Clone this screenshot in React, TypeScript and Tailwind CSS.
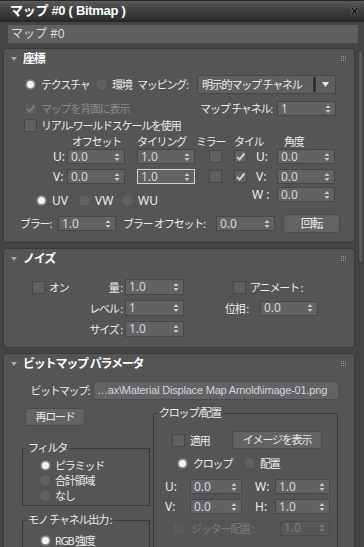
import React from "react";

function Arrows({ dim }: { dim?: boolean }) {
  return (
    <svg width="6" height="10" viewBox="0 0 6 10" className="shrink-0">
      <path d="M0.5 4 L3 1 L5.5 4 Z M0.5 6 L5.5 6 L3 9 Z" fill={dim ? "#7a7a7a" : "#c9c9c9"} />
    </svg>
  );
}

function Spin({ v, w, h = "h-[15px]", focus, dim }: { v: string; w: string; h?: string; focus?: boolean; dim?: boolean }) {
  return (
    <div
      className={`flex ${w} ${h} shrink-0 items-center justify-between border pl-[3px] pr-[4px] text-[12px] tracking-normal ${
        focus ? "border-[#d2d2d2]" : dim ? "border-[#4b4b4b]" : "border-[#464646]"
      } ${dim ? "bg-[#575757] text-[#7c7c7c]" : "bg-[#626262] text-[#cfd7e0]"}`}
    >
      <span className="leading-none">{v}</span>
      <Arrows dim={dim} />
    </div>
  );
}

function Radio({ on }: { on?: boolean }) {
  return (
    <span className="flex h-[13px] w-[13px] shrink-0 items-center justify-center rounded-full border border-[#4e4e4e] bg-[#606060]">
      {on ? <span className="h-[7px] w-[7px] rounded-full bg-[#f4f4f4] shadow-[0_0_2px_1px_rgba(255,255,255,0.45)]" /> : null}
    </span>
  );
}

function Check({ on, dim }: { on?: boolean; dim?: boolean }) {
  return (
    <span className={`flex h-[13px] w-[13px] shrink-0 items-center justify-center border ${dim ? "border-[#525252] bg-[#5a5a5a]" : "border-[#474747] bg-[#606060]"}`}>
      {on ? (
        <svg width="11" height="11" viewBox="0 0 11 11">
          <path d="M2 6 L4.5 8.5 L9.5 2.5" fill="none" stroke={dim ? "#808080" : "#cfcfcf"} strokeWidth="2" />
        </svg>
      ) : null}
    </span>
  );
}

function Btn({ children, className }: { children: React.ReactNode; className: string }) {
  return (
    <div className={`flex shrink-0 items-center justify-center whitespace-nowrap rounded-[3px] border border-[#4b4b4b] bg-[#636363] text-[#e8e8e8] ${className}`}>
      {children}
    </div>
  );
}

function Grip() {
  return (
    <svg width="6" height="6" viewBox="0 0 6 6" className="shrink-0">
      {[0, 2, 4].map((y) => [0, 2, 4].map((x) => <rect key={`${x}-${y}`} x={x} y={y} width="1" height="1" fill="#9a9a9a" />))}
    </svg>
  );
}

function Rollout({ title, className, children }: { title: string; className: string; children: React.ReactNode }) {
  return (
    <section className={`rounded-[3px] border border-[#393939] bg-[#555555] ${className}`}>
      <div className="flex h-[20px] items-center">
        <svg width="6" height="4" viewBox="0 0 6 4" className="ml-[7px] shrink-0">
          <path d="M0 0 L6 0 L3 4 Z" fill="#a8a8a8" />
        </svg>
        <span className="ml-[6px] text-[12px] font-bold text-white">{title}</span>
        <span className="flex-1" />
        <span className="mr-[7px]"><Grip /></span>
      </div>
      {children}
    </section>
  );
}

function Group({ title, className, children }: { title: string; className: string; children: React.ReactNode }) {
  return (
    <fieldset className={`border border-[#393939] ${className}`}>
      <legend className="ml-[3px] whitespace-nowrap px-[2px] text-[11px] leading-[14px] text-[#ececec]">{title}</legend>
      {children}
    </fieldset>
  );
}

const L = "shrink-0 whitespace-nowrap leading-none";

export default function App() {
  return (
    <div className="h-[547px] w-[364px] overflow-hidden bg-[#444444] font-['Noto_Sans','Noto_Sans_CJK_JP',sans-serif] text-[11px] tracking-[-1.2px] text-[#ececec] select-none">
      <div className="flex h-[22px] items-center border-t border-b-[2px] border-t-[#262626] border-b-[#262626] bg-gradient-to-b from-[#5a5a5a] via-[#3e3e3e] to-[#2f2f2f] pl-[10px] pr-[6px]">
        <span className="font-['Liberation_Sans','Noto_Sans_CJK_JP',sans-serif] text-[13px] font-bold tracking-[-0.3px] text-white">マップ #0 ( Bitmap )</span>
        <span className="flex-1" />
        <span className="text-[12px] font-bold tracking-normal text-[#111] [text-shadow:0_0_1px_#ddd]">x</span>
      </div>

      <div className="ml-[8px] mt-[3px] flex h-[18px] w-[350px] items-center bg-[#5f5f5f] pl-[3px] text-[12px] tracking-normal text-[#d8d8d8]">
        マップ #0
      </div>

      <div className="mt-[5px] flex">
        <div className="ml-[3px] w-[352px] shrink-0">
          <Rollout title="座標" className="">
            <div className="mt-[6px] flex h-[19px] items-center">
              <div className="ml-[20px] flex w-[71px] items-center gap-[4px]"><Radio on /><span className={L}>テクスチャ</span></div>
              <div className="flex w-[42px] items-center gap-[4px]"><Radio /><span className={L}>環境</span></div>
              <div className={`w-[60px] ${L}`}>マッピング:</div>
              <div className="flex h-[19px] w-[139px] items-center border border-[#464646] bg-[#5f5f5f]">
                <span className="flex-1 whitespace-nowrap pl-[4px] leading-none">明示的マップ チャネル</span>
                <span className="h-[15px] w-[3px] bg-[#333333]" />
                <span className="flex w-[19px] justify-center">
                  <svg width="7" height="5" viewBox="0 0 7 5"><path d="M0 0 L7 0 L3.5 5 Z" fill="#e6e6e6" /></svg>
                </span>
              </div>
            </div>

            <div className="mt-[7px] flex h-[15px] items-center">
              <div className="ml-[20px] flex w-[176px] items-center gap-[4px]"><Check on dim /><span className={`${L} text-[#8c8c8c]`}>マップを背面に表示</span></div>
              <div className={`flex w-[77px] justify-end pr-[5px] ${L}`}>マップ チャネル:</div>
              <Spin v="1" w="w-[59px]" />
            </div>

            <div className="mt-[2px] flex h-[14px] items-center">
              <div className="ml-[20px] flex items-center gap-[4px]"><Check /><span className={L}>リアル-ワールドスケールを使用</span></div>
            </div>

            <div className="mt-[3px] flex h-[12px] items-center">
              <div className={`ml-[68px] w-[65px] ${L}`}>オフセット</div>
              <div className={`w-[59px] ${L}`}>タイリング</div>
              <div className={`w-[38px] ${L}`}>ミラー</div>
              <div className={`w-[50px] ${L}`}>タイル</div>
              <div className={L}>角度</div>
            </div>

            {[
              { k: "U:", focus: false },
              { k: "V:", focus: true },
            ].map((r, i) => (
              <div key={r.k} className={`flex h-[15px] items-center ${i === 0 ? "mt-[2px]" : "mt-[5px]"}`}>
                <div className={`ml-[49px] w-[14px] text-[12px] tracking-normal ${L}`}>{r.k}</div>
                <Spin v="0.0" w="w-[58px]" />
                <div className="ml-[12px]"><Spin v="1.0" w="w-[58px]" focus={r.focus} /></div>
                <div className="ml-[14px]"><Check /></div>
                <div className="ml-[12px]"><Check on /></div>
                <div className={`w-[30px] pl-[9px] text-[12px] tracking-normal ${L}`}>{r.k}</div>
                <Spin v="0.0" w="w-[58px]" />
              </div>
            ))}

            <div className="mt-[3px] flex h-[20px] items-start">
              <div className="ml-[31px] mt-[7px] flex w-[43px] items-center gap-[4px]"><Radio on /><span className={`text-[12px] tracking-normal ${L}`}>UV</span></div>
              <div className="mt-[7px] flex w-[43px] items-center gap-[4px]"><Radio /><span className={`text-[12px] tracking-normal ${L}`}>VW</span></div>
              <div className="mt-[7px] flex w-[131px] items-center gap-[4px]"><Radio /><span className={`text-[12px] tracking-normal ${L}`}>WU</span></div>
              <div className={`flex h-[15px] w-[25px] items-center text-[12px] tracking-normal ${L}`}>W :</div>
              <Spin v="0.0" w="w-[58px]" />
            </div>

            <div className="mt-[7px] mb-[9px] flex h-[19px] items-center">
              <div className={`ml-[16px] w-[38px] ${L}`}>ブラー:</div>
              <Spin v="1.0" w="w-[58px]" />
              <div className={`ml-[7px] w-[93px] ${L}`}>ブラー オフセット:</div>
              <Spin v="0.0" w="w-[59px]" />
              <Btn className="ml-[8px] h-[19px] w-[57px] text-[12px]">回転</Btn>
            </div>
          </Rollout>

          <Rollout title="ノイズ" className="mt-[5px]">
            <div className="mt-[10px] flex h-[16px] items-center">
              <div className="ml-[28px] flex w-[58px] items-center gap-[4px]"><Check /><span className={L}>オン</span></div>
              <div className={`flex w-[32px] justify-end ${L}`}>量 :</div>
              <div className="ml-[3px]"><Spin v="1.0" w="w-[59px]" h="h-[16px]" /></div>
              <div className="ml-[49px] flex items-center gap-[4px]"><Check /><span className={L}>アニメート :</span></div>
            </div>
            <div className="mt-[5px] flex h-[16px] items-center">
              <div className={`ml-[86px] flex w-[32px] justify-end ${L}`}>レベル :</div>
              <div className="ml-[3px]"><Spin v="1" w="w-[59px]" h="h-[16px]" /></div>
              <div className={`ml-[41px] w-[35px] ${L}`}>位相 :</div>
              <Spin v="0.0" w="w-[58px]" />
            </div>
            <div className="mt-[5px] mb-[10px] flex h-[16px] items-center">
              <div className={`ml-[86px] flex w-[32px] justify-end ${L}`}>サイズ :</div>
              <div className="ml-[3px]"><Spin v="1.0" w="w-[59px]" h="h-[16px]" /></div>
            </div>
          </Rollout>

          <Rollout title="ビットマップ パラメータ" className="mt-[5px] h-[260px]">
            <div className="mt-[7px] flex h-[19px] items-center">
              <div className={`ml-[30px] flex w-[59px] justify-end pr-[4px] tracking-[-1.5px] ${L}`}>ビットマップ:</div>
              <Btn className="h-[19px] w-[246px] !justify-start overflow-hidden pl-[3px] font-['Liberation_Sans',sans-serif] text-[11px] tracking-[-0.2px] !text-[#cfd7e0]">
                {"…ax\\Material Displace Map Arnold\\image-01.png"}
              </Btn>
            </div>

            <div className="flex">
              <div className="w-[149px] shrink-0">
                <Btn className="ml-[21px] mt-[8px] h-[18px] w-[60px]">再ロード</Btn>
                <Group title="フィルタ" className="ml-[18px] mt-[15px] h-[65px] w-[128px]">
                  <div className="mt-[3px] flex flex-col">
                    {[
                      { t: "ピラミッド", on: true },
                      { t: "合計領域", on: false },
                      { t: "なし", on: false },
                    ].map((r) => (
                      <div key={r.t} className="flex h-[15px] items-center gap-[3px] pl-[16px]">
                        <Radio on={r.on} /><span className={L}>{r.t}</span>
                      </div>
                    ))}
                  </div>
                </Group>
                <Group title="モノ チャネル出力 :" className="ml-[18px] mt-[7px] h-[60px] w-[128px]">
                  <div className="mt-[6px] flex h-[15px] items-center gap-[3px] pl-[16px]">
                    <Radio on /><span className={L}>RGB 強度</span>
                  </div>
                </Group>
              </div>

              <Group title="クロップ/配置" className="mt-[6px] h-[150px] w-[185px] shrink-0">
                <div className="mt-[11px] flex h-[18px] items-center">
                  <div className="ml-[18px] flex w-[60px] items-center gap-[5px]"><Check /><span className={L}>適用</span></div>
                  <Btn className="h-[18px] w-[90px]">イメージを表示</Btn>
                </div>
                <div className="mt-[7px] flex h-[14px] items-center">
                  <div className="ml-[22px] flex w-[67px] items-center gap-[4px]"><Radio on /><span className={L}>クロップ</span></div>
                  <div className="flex items-center gap-[4px]"><Radio /><span className={L}>配置</span></div>
                </div>
                {[
                  { a: "U:", b: "W:", m: "mt-[9px]" },
                  { a: "V:", b: "H:", m: "mt-[5px]" },
                ].map((r) => (
                  <div key={r.a} className={`flex h-[15px] items-center ${r.m}`}>
                    <div className={`ml-[11px] w-[25px] text-[12px] tracking-normal ${L}`}>{r.a}</div>
                    <Spin v="0.0" w="w-[52px]" />
                    <div className={`ml-[13px] w-[20px] text-[12px] tracking-normal ${L}`}>{r.b}</div>
                    <Spin v="1.0" w="w-[55px]" />
                  </div>
                ))}
                <div className="mt-[7px] flex h-[14px] items-center">
                  <div className="ml-[18px] flex w-[108px] items-center gap-[6px]"><Check dim /><span className={`${L} text-[#7c7c7c]`}>ジッター配置 :</span></div>
                  <Spin v="1.0" w="w-[50px]" dim />
                </div>
              </Group>
            </div>
          </Rollout>
        </div>

        <div className="ml-[3px] mt-[2px] h-[213px] w-[5px] shrink-0 rounded-full border border-[#3e3e3e] bg-[#5a5a5a]" />
      </div>
    </div>
  );
}
